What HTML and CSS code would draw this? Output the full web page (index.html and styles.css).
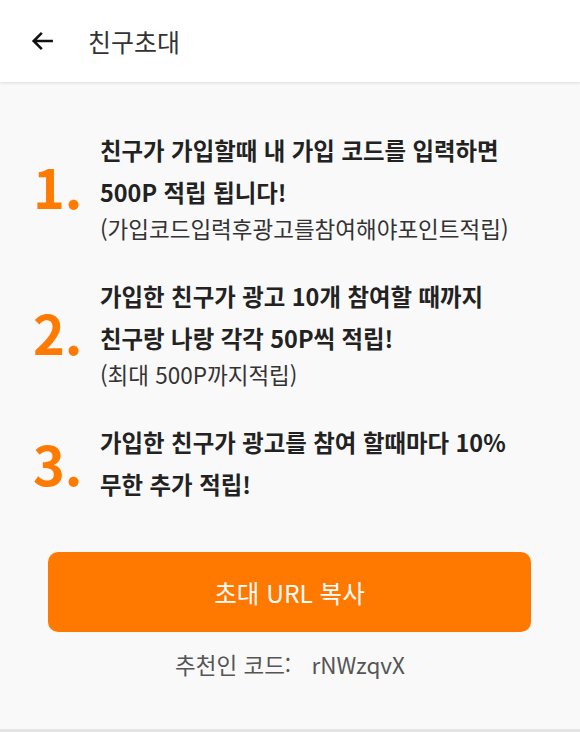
FILE: index.html
```html
<!DOCTYPE html>
<html lang="ko">

<head>
    <meta charset="UTF-8">
    <title>친구초대</title>
    <link rel="stylesheet" href="styles.css">
</head>

<body>

    <!-- 상단 바 -->
    <header class="topbar">
        <button class="back-btn" aria-label="뒤로">
            <svg width="28" height="28" viewBox="0 0 24 24">
                <path d="M20.5 12H4.5M11 5l-7 7 7 7" fill="none" stroke="#111" stroke-width="2.2" />
            </svg>
        </button>
        <span class="title">친구초대</span>
    </header>

    <main class="content">

        <div class="step">
            <div class="num">1.</div>
            <div class="desc">
                <p class="strong">친구가 가입할때 내 가입 코드를 입력하면</p>
                <p class="strong">500P 적립 됩니다!</p>
                <p class="note">(가입코드입력후광고를참여해야포인트적립)</p>
            </div>
        </div>

        <div class="step">
            <div class="num">2.</div>
            <div class="desc">
                <p class="strong">가입한 친구가 광고 10개 참여할 때까지</p>
                <p class="strong">친구랑 나랑 각각 50P씩 적립!</p>
                <p class="note">(최대 500P까지적립)</p>
            </div>
        </div>

        <div class="step">
            <div class="num">3.</div>
            <div class="desc">
                <p class="strong">가입한 친구가 광고를 참여 할때마다 10%</p>
                <p class="strong">무한 추가 적립!</p>
            </div>
        </div>

        <button class="copy-btn">초대 URL 복사</button>

        <p class="code">추천인 코드: <span class="code-val">rNWzqvX</span></p>

    </main>

</body>

</html>
```

FILE: styles.css
```css
* {
    box-sizing: border-box;
}

html,
body {
    height: 100%;
}

body {
    margin: 0;
    padding: 0;
    background-color: #f9f9f9;
    font-family: "Noto Sans CJK KR", "Noto Sans", sans-serif;
    color: #222;
    display: flex;
    flex-direction: column;
    border-bottom: 3px solid #e4e4e4;
}

.topbar {
    height: 82px;
    background-color: #fff;
    display: flex;
    align-items: center;
    box-shadow: 0 1px 3px rgba(0, 0, 0, 0.12);
    position: relative;
    z-index: 1;
}

.back-btn {
    border: none;
    background: none;
    padding: 0;
    margin-left: 29px;
    width: 28px;
    height: 28px;
    display: flex;
}

.title {
    margin-left: 31px;
    font-size: 25px;
    color: #333;
}

.content {
    flex: 1;
    padding-top: 47px;
}

.step {
    display: flex;
    align-items: center;
    margin-bottom: 32px;
}

.step:last-of-type {
    margin-bottom: 0;
}

.num {
    width: 100px;
    padding-left: 33px;
    font-size: 54px;
    font-weight: bold;
    color: #ff7a00;
    line-height: 1;
}

.desc p {
    margin: 0;
}

.strong {
    font-size: 23.4px;
    font-weight: bold;
    line-height: 42px;
    color: #222;
}

.note {
    font-size: 22.5px;
    line-height: 30px;
    color: #333;
}

.copy-btn {
    display: block;
    width: calc(100% - 97px);
    margin: 47px 0 0 48px;
    height: 80px;
    border: none;
    border-radius: 10px;
    background-color: #ff7800;
    color: #fff;
    font-family: inherit;
    font-size: 24.5px;
}

.code {
    margin: 17px 0 0;
    text-align: center;
    font-size: 22.5px;
    line-height: 30px;
    color: #555;
}

.code-val {
    margin-left: 14px;
}
```
